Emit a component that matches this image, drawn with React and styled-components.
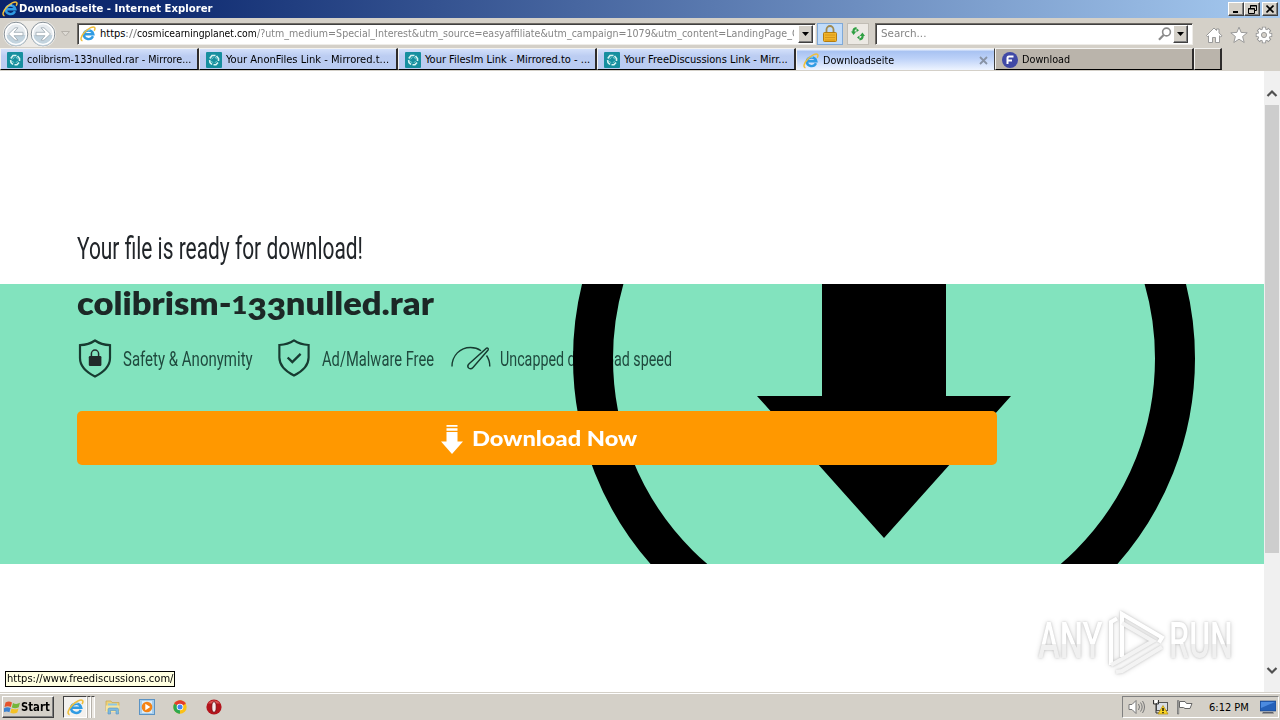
import React, { useLayoutEffect, useRef, useState } from "react";
import styled, { createGlobalStyle, css } from "styled-components";

const GlobalStyle = createGlobalStyle`
  *, *::before, *::after { box-sizing: border-box; }
  html, body { margin: 0; padding: 0; overflow: hidden; background: #fff; }
  body { font-family: "DejaVu Sans Condensed", "DejaVu Sans", sans-serif; font-size: 11px; color: #000; }
  svg { display: block; flex: none; }
`;

/* ---------- text set to a fixed measure ---------- */

const Measure = styled.span`
  display: block;
  flex: none;
  width: ${(p) => p.$w}px;
  white-space: pre;
`;
const Stretch = styled.span`
  display: inline-block;
  transform-origin: 0 50%;
`;

function Fit({ w, children, className }) {
  const ref = useRef(null);
  const [scale, setScale] = useState(1);
  useLayoutEffect(() => {
    setScale(w / ref.current.offsetWidth);
  }, [w]);
  return (
    <Measure $w={w} className={className}>
      <Stretch ref={ref} style={{ transform: `scaleX(${scale})` }}>{children}</Stretch>
    </Measure>
  );
}

/* ---------- window frame ---------- */

const Screen = styled.div`
  width: 1280px;
  height: 720px;
  display: flex;
  flex-direction: column;
  overflow: hidden;
  background: #d4d0c8;
`;

const TitleBar = styled.header`
  height: 18px;
  flex: none;
  display: flex;
  align-items: center;
  padding: 0 2px;
  background: linear-gradient(90deg, #0a246a 0%, #0e2a70 12%, #a6caf0 100%);
`;
const TitleText = styled(Fit)`
  margin-left: 1px;
  color: #fff;
  font-weight: 700;
  line-height: 18px;
`;
const WindowButtons = styled.div`
  margin-left: auto;
  display: flex;
`;
const raised = css`
  background: #d4d0c8;
  border: 1px solid;
  border-color: #fff #404040 #404040 #fff;
  box-shadow: inset -1px -1px 0 #808080;
`;
const WindowButton = styled.button`
  ${raised}
  width: 16px;
  height: 14px;
  padding: 0;
  margin-left: ${(p) => (p.$gap ? 2 : 0)}px;
  display: flex;
  align-items: center;
  justify-content: center;
`;

/* ---------- navigation row ---------- */

const NavRow = styled.div`
  height: 30px;
  flex: none;
  display: flex;
  align-items: center;
  padding-left: 3px;
  border-top: 1px solid #d4d0c8;
`;
const OrbPair = styled.div`
  display: flex;
  gap: 1px;
  height: 26px;
  border-radius: 13px;
  background: #eceae6;
`;
const AddressBox = styled.div`
  display: flex;
  align-items: center;
  flex: none;
  width: ${(p) => p.$w}px;
  height: 22px;
  margin-left: ${(p) => p.$gap}px;
  padding: 1px 2px;
  background: #fff;
  border: 1px solid;
  border-color: #706c66 #eeece8 #eeece8 #706c66;
  box-shadow: inset 1px 1px 0 #404040;
`;
const UrlText = styled.div`
  display: flex;
  flex: 1;
  overflow: hidden;
  margin: 0 4px;
  height: 18px;
  line-height: 18px;
`;
const UrlPart = styled(Fit)`
  color: ${(p) => (p.$strong ? "#000" : "#858585")};
`;
const GreyPart = styled(Fit)`
  color: #858585;
`;
const DropButton = styled.button`
  ${raised}
  width: 15px;
  height: 18px;
  padding: 0;
  flex: none;
  display: flex;
  align-items: center;
  justify-content: center;
`;
const ToolButton = styled.div`
  width: ${(p) => p.$w}px;
  height: 22px;
  flex: none;
  margin-left: ${(p) => p.$gap}px;
  display: flex;
  align-items: center;
  justify-content: center;
  background: ${(p) => (p.$lit ? "#c1dcfa" : "#ece9e4")};
  border: 1px solid ${(p) => (p.$lit ? "#7fa9d8" : "#c1bdb5")};
`;
const SearchText = styled(Fit)`
  color: #858585;
  margin-left: 3px;
  line-height: 18px;
`;
const SearchTools = styled.div`
  margin-left: auto;
  margin-right: 2px;
  display: flex;
  gap: 1px;
  align-items: center;
`;
const CommandIcons = styled.div`
  margin-left: 12px;
  padding-top: 3px;
  display: flex;
  gap: 7px;
`;

/* ---------- tabs ---------- */

const TabRow = styled.nav`
  height: 23px;
  flex: none;
  display: flex;
  padding-bottom: 1px;
`;
const tabFill = {
  grouped: "linear-gradient(180deg, #d3e0fa 0%, #bccdf2 35%, #b9cbf1 100%)",
  active: "linear-gradient(180deg, #f4f8ff 0%, #a9c3f2 12%, #bcd1f8 45%, #eef4ff 100%)",
  idle: "#bab4ab",
};
const Tab = styled.div`
  width: ${(p) => p.$w}px;
  height: 22px;
  flex: none;
  display: flex;
  align-items: center;
  padding: 2px 6px 0 6px;
  background: ${(p) => tabFill[p.$kind]};
  border-top: 1px solid #f4f3f0;
  border-left: 1px solid #f4f3f0;
  border-right: ${(p) => (p.$kind === "active" ? "1px solid #404040" : "2px solid #2e2c2c")};
  border-bottom: ${(p) => (p.$kind === "active" ? "0" : "1px solid #000")};
`;
const TabLabel = styled(Fit)`
  margin-left: 4px;
  line-height: 18px;
`;
const TabClose = styled.span`
  margin-left: auto;
`;

/* ---------- page ---------- */

const Viewport = styled.div`
  flex: 1;
  min-height: 0;
  display: flex;
  position: relative;
  background: #fff;
`;
const Page = styled.main`
  width: 1264px;
  display: flex;
  flex-direction: column;
`;
const Intro = styled.section`
  height: 213px;
  flex: none;
  padding: 156px 0 0 77px;
`;
const Lead = styled(Fit)`
  font-family: Roboto, sans-serif;
  font-weight: 400;
  font-size: 30.5px;
  line-height: 44px;
  color: #212529;
`;
const Band = styled.section`
  position: relative;
  height: 280px;
  flex: none;
  overflow: hidden;
  padding: 0 0 0 77px;
  background: #82e3be;
`;
const FileName = styled(Fit)`
  font-family: Lato, sans-serif;
  font-weight: 800;
  font-size: 32px;
  line-height: 37px;
  height: 38px;
  color: #1c2826;
`;
const OldStyle = styled.span`
  display: inline-block;
  line-height: 1;
  font-size: ${(p) => (p.$drop ? 0.96 : 0.79)}em;
  transform: translateY(${(p) => (p.$drop ? 0.16 : -0.02)}em);
`;
const Features = styled.div`
  display: flex;
  align-items: center;
  height: 40px;
  margin-top: 16px;
`;
const FeatureIcon = styled.span`
  width: ${(p) => p.$w}px;
  flex: none;
`;
const FeatureText = styled(Fit)`
  font-family: Roboto, sans-serif;
  font-weight: 400;
  font-size: 21px;
  line-height: 40px;
  padding-top: 1px;
  color: #1f4a3e;
`;
const Artwork = styled.svg`
  position: absolute;
  left: 0;
  top: 0;
`;
const DownloadButton = styled.button`
  position: relative;
  z-index: 1;
  width: 920px;
  height: 54px;
  margin-top: 33px;
  padding: 1px 0 0 4px;
  border: 0;
  border-radius: 5px;
  background: #ff9800;
  display: flex;
  align-items: center;
  justify-content: center;
  gap: 9px;
`;
const ArrowSlot = styled.span`
  padding-top: 2px;
`;
const DownloadLabel = styled(Fit)`
  font-family: Lato, sans-serif;
  font-weight: 900;
  font-size: 21.5px;
  line-height: 53px;
  text-align: left;
  color: #fff;
`;

const ScrollBar = styled.aside`
  width: 16px;
  background: #f0f0f0;
  display: flex;
  flex-direction: column;
  align-items: center;
  padding: 18px 0 17px;
`;
const Thumb = styled.div`
  width: 14px;
  height: 448px;
  margin: 7px 0 auto;
  background: #cdcdcd;
`;

const StatusTip = styled.div`
  position: absolute;
  left: 5px;
  bottom: 5px;
  width: 170px;
  height: 16px;
  padding-left: 1px;
  line-height: 14px;
  border: 1px solid #000;
  background: #ffffe1;
`;
const Watermark = styled.div`
  position: absolute;
  left: 1038px;
  top: 535px;
  display: flex;
  align-items: center;
  gap: 4px;
  filter: drop-shadow(0 0 1px rgba(0, 0, 0, 0.16)) drop-shadow(0 0 2.5px rgba(0, 0, 0, 0.16));
`;
const MarkText = styled(Fit)`
  font-family: Roboto, sans-serif;
  font-weight: 500;
  font-size: 50px;
  line-height: 70px;
  span {
    color: transparent;
    background: linear-gradient(180deg, #fff 54%, #f0f0f0 54%);
    background-clip: text;
    -webkit-background-clip: text;
  }
`;

/* ---------- taskbar ---------- */

const TaskBar = styled.footer`
  height: 28px;
  flex: none;
  display: flex;
  align-items: center;
  padding: 2px 1px 0 2px;
  background: #d4d0c8;
  box-shadow: inset 0 1px 0 #d4d0c8, inset 0 2px 0 #fff;
`;
const StartButton = styled.button`
  ${raised}
  width: 52px;
  height: 22px;
  padding: 0 0 0 1px;
  display: flex;
  align-items: center;
`;
const StartText = styled(Fit)`
  font-family: "DejaVu Sans Condensed", sans-serif;
  font-weight: 700;
  font-size: 12px;
  line-height: 18px;
  text-align: left;
  color: #000;
`;
const RunningApp = styled.div`
  width: 24px;
  height: 22px;
  margin-left: 9px;
  display: flex;
  align-items: center;
  justify-content: center;
  background: #f3f1ee;
  border: 1px solid;
  border-color: #404040 #fff #fff #404040;
`;
const StackEdge = styled.div`
  width: 4px;
  height: 22px;
  background: #ece9e4;
  border-top: 1px solid #404040;
  border-right: 1px solid #fff;
  border-left: 1px solid #b5b1a9;
`;
const QuickIcons = styled.div`
  display: flex;
  margin-left: 10px;
  gap: 17.7px;
`;
const Tray = styled.div`
  margin-left: auto;
  width: 157px;
  height: 22px;
  display: flex;
  align-items: center;
  padding: 0 2px 0 5px;
  border: 1px solid;
  border-color: #808080 #fff #fff #808080;
`;
const TrayIcons = styled.div`
  display: flex;
  gap: 7px;
`;
const Clock = styled(Fit)`
  margin-left: 16px;
  margin-right: auto;
  line-height: 19px;
`;

/* ---------- icons ---------- */

const IEIcon = ({ s = 16 }) => (
  <svg width={s} height={s} viewBox="0 0 16 16" fill="none">
    <path d="M13 10.300A4.900 4.900 0 0 1 3.700 8.700 4.900 4.900 0 0 1 13.300 8.300H5" stroke="#2f9be3" strokeWidth="2.400" />
    <path d="M4.600 6.200A4.500 4.500 0 0 1 10 4" stroke="#a5dcfa" strokeWidth="1" />
    <path d="M2.500 14.700C-.2 14.200 1 10 4.600 6.200 8.800 1.800 13.300.1 14.600 1.500c.7.8.2 2.200-.5 3.200" stroke="#f0bf3c" strokeWidth="1.500" />
  </svg>
);
const ArrowOrb = ({ flip }) => (
  <svg width="26" height="26" viewBox="0 0 26 26">
    <circle cx="13" cy="13" r="11.800" fill="#e6ebef" stroke="#899299" />
    <path d="M2 14a11 11 0 0 0 22 0Z" fill="#c2d3de" />
    <circle cx="13" cy="13" r="10.400" fill="none" stroke="#fff" strokeWidth="1.400" />
    <g transform={flip ? "matrix(-1 0 0 1 26 0)" : undefined}>
      <path d="M5.500 13 12 6.800h3l-4 4.500h9v3.400h-9l4 4.500h-3Z" fill="#fff" stroke="#9aa7b0" strokeWidth=".8" />
    </g>
  </svg>
);
const Caret = ({ fill = "#000", w = 7 }) => (
  <svg width={w} height="4" viewBox="0 0 7 4"><path d="M0 0h7L3.500 4Z" fill={fill} /></svg>
);
const MirrorIcon = () => (
  <svg width="16" height="16" viewBox="0 0 16 16" fill="none">
    <rect width="16" height="16" rx="1" fill="#178f9f" />
    <path d="M3.800 6.500 6 3.500h3.500M10.500 4l2 2.500v2.500M12 10.500 10 12.700H7.500M6 12.500 4 10.500 3.600 8" stroke="#d8f3f2" strokeWidth="1.600" />
    <path d="m5.500 7 2-1.500M9 5l1.800 2.300M10.700 9 9 10.800M7 10.800 5.300 9" stroke="#7fd0d2" />
  </svg>
);
const FIcon = () => (
  <svg width="16" height="16" viewBox="0 0 16 16">
    <circle cx="8" cy="8" r="8" fill="#4049a6" />
    <path d="M5.500 12V6q0-1.500 1.500-1.500h4.500M5.500 8.500H10" stroke="#fff" strokeWidth="2" fill="none" />
  </svg>
);
const LockIcon = () => (
  <svg width="14" height="17" viewBox="0 0 14 17">
    <path d="M3.500 8V4.500a3.500 3.500 0 0 1 7 0V8" fill="none" stroke="#a08a50" strokeWidth="1.800" />
    <rect x=".5" y="7.500" width="13" height="9" rx="1" fill="#f0b429" stroke="#b47d10" />
    <path d="M2 10h10M2 12.500h10M2 15h10" stroke="#d18f16" strokeWidth=".8" />
  </svg>
);
const RefreshIcon = () => (
  <svg width="14" height="14" viewBox="0 0 14 14" fill="#2fa043">
    <path d="M5.500 0v2.300c-1.500.2-2 1-2 2.200H5.300L2.600 8 0 4.500h1.300C1.300 2 2.800.1 5.500 0Z" />
    <path d="M5.500 1.200 8 3.300 5.500 5.200Z" />
    <path d="M8.500 13.500v-2.300c1.500-.2 2-1 2-2.200H8.700l2.700-3.500L14 9h-1.300c0 2.500-1.500 4.400-4.200 4.500Z" />
    <path d="M8.500 8.500v4L6 10.400Z" />
  </svg>
);
const SearchGlyph = () => (
  <svg width="14" height="14" viewBox="0 0 14 14" fill="none" stroke="#8a8a8a">
    <circle cx="8.500" cy="5" r="3.900" strokeWidth="1.600" /><path d="M5.600 8 1 12.800" strokeWidth="2.200" />
  </svg>
);
const cmd = { fill: "#fff", stroke: "#929292", strokeWidth: 0.9 };
const HomeIcon = () => (
  <svg width="18" height="18" viewBox="0 0 18 18" {...cmd}>
    <path d="M1.500 9.500 9 2l2.500 2.500V3h2.500v4l3 2.800-1.200 1.200-1.300-1.200v6.700h-4v-5H7.500v5h-4V9.800L2.600 10.800Z" />
  </svg>
);
const StarIcon = () => (
  <svg width="18" height="18" viewBox="0 0 18 18" {...cmd}>
    <path d="m9 1.200 2.100 5.200 6.100.4-4.600 3.700 1.600 6L9 13.200l-5.200 3.300 1.600-6L.8 6.800l6.100-.4Z" />
  </svg>
);
const GearIcon = () => (
  <svg width="18" height="18" viewBox="0 0 18 18" fill="none">
    <g stroke="#929292" strokeWidth="4.200">
      <path d="M9 .8v16.400M.8 9h16.400M3.200 3.200l11.600 11.600M14.800 3.200 3.200 14.800" />
    </g>
    <circle cx="9" cy="9" r="6.400" fill="#929292" />
    <path d="M9 1.600v14.800M1.600 9h14.800M3.800 3.800l10.400 10.400M14.200 3.800 3.800 14.200" stroke="#fff" strokeWidth="2.500" />
    <circle cx="9" cy="9" r="5.700" fill="#fff" />
    <circle cx="9" cy="9" r="2.600" fill="#d4d0c8" stroke="#929292" strokeWidth=".9" />
  </svg>
);
const Chevron = ({ down }) => (
  <svg width="12" height="9" viewBox="0 0 12 9">
    <path d={down ? "M1.500 2 6 6.500 10.500 2" : "M1.500 7 6 2.500 10.500 7"} fill="none" stroke="#505050" strokeWidth="2.200" />
  </svg>
);

const shield = "M17 1.500C12 5 7 6 2 6.200V19c0 9.500 7 14.500 15 18.500 8-4 15-9 15-18.500V6.200C27 6 22 5 17 1.500Z";
const ShieldLock = () => (
  <svg width="36" height="39" viewBox="-1 0 36 39">
    <path d={shield} fill="none" stroke="#173b31" strokeWidth="2.200" />
    <rect x="10.800" y="17" width="12.600" height="10" rx="1.200" fill="#222b2b" />
    <path d="M13.400 17.500v-2.800a3.600 3.600 0 0 1 7.200 0v2.800" fill="none" stroke="#222b2b" strokeWidth="1.500" />
  </svg>
);
const ShieldCheck = () => (
  <svg width="35" height="38" viewBox="-1 0 35 39">
    <path d={shield} fill="none" stroke="#173b31" strokeWidth="2.200" />
    <path d="m10.500 19 4.800 4.800 8.500-8.500" fill="none" stroke="#173b31" strokeWidth="2.400" />
  </svg>
);
const Gauge = () => (
  <svg width="40" height="24" viewBox="0 0 40 24" fill="none" stroke="#173b31" strokeWidth="1.400">
    <path d="M1 20.500C1 9.500 9 1.500 19.500 1.500c4 0 7.500 1.100 10.500 3.200M35.500 9.500c2.200 3 3.300 6.800 3.300 11" />
    <path d="M35.500 2.200c1.300-.5 2.300.6 1.600 1.800L22 21.500c-1.600 1.800-3.600 1.500-4.500.4-1.100-1.300-.7-3 .6-4.200Z" />
  </svg>
);
const ArrowDown = () => (
  <svg width="22" height="30" viewBox="0 0 22 30" fill="#fff">
    <path d="M5.500 0h11v1.800h-11ZM5.500 3.300h11v2.500h-11ZM5.500 7h11v9.500H22L11 29 0 16.500h5.500Z" />
  </svg>
);
const Play = () => (
  <svg width="58" height="68" viewBox="0 0 58 68" fill="none" strokeWidth="4">
    <path d="M4 58V15l6-3.500" stroke="#fff" />
    <path d="M15 50V7l40 23.500-3 5" stroke="#fff" />
    <path d="M15 16 46 34 15 52 4 58M9 65l6-1 40-24" stroke="#f3f3f3" />
  </svg>
);

const Flag = () => (
  <svg width="17" height="16" viewBox="0 0 17 16">
    <path d="M1.500 3.500C4 2 6 2.200 8 3.500L6.800 8C5 7 3 6.800.5 8Z" fill="#e5542c" />
    <path d="M9 4c2 1.200 4.500 1.200 7-.2l-1.300 4.400C12.500 9.500 10 9.500 7.800 8.400Z" fill="#74b63b" />
    <path d="M.2 9C2.500 7.800 4.700 8 6.600 9l-1.200 4.200C3.600 12.200 1.500 12.200-.8 13.400Z" fill="#3b82d0" />
    <path d="M7.500 9.500c2 1.100 4.500 1.100 7-.1l-1.200 4.200c-2.400 1.300-4.800 1.300-7 .2Z" fill="#f4c125" />
  </svg>
);
const FolderIcon = () => (
  <svg width="16" height="16" viewBox="0 0 16 16">
    <path d="M1 2h5l1 1.500h7V12H1Z" fill="#ecd27b" stroke="#c8a64a" strokeWidth=".7" />
    <path d="M3 4.500h9v4H3Z" fill="#8cc7e6" /><path d="M1 6.500h13.500v6.500H1Z" fill="#f5e4a0" />
    <path d="M3 15v-4.500q0-1.500 1.500-1.500h7.500q1.500 0 1.500 1.500V15h-2.500v-3.500h-5.500V15Z" fill="#7db9e0" stroke="#5794c0" strokeWidth=".6" />
  </svg>
);
const MediaIcon = () => (
  <svg width="16" height="16" viewBox="0 0 16 16">
    <rect x=".5" y=".5" width="15" height="15" fill="#a6cdec" stroke="#5b93c4" />
    <rect x="3" y="2" width="10" height="12" fill="#d9ebf8" />
    <circle cx="8" cy="8" r="5.300" fill="#f48315" /><path d="M6.300 4.800 11.300 8l-5 3.200Z" fill="#fff" />
  </svg>
);
const ChromeIcon = () => (
  <svg width="16" height="16" viewBox="0 0 16 16">
    <circle cx="8" cy="8" r="6.700" fill="#fbc116" />
    <path d="M8 8 2.200 4.650A6.700 6.700 0 0 1 13.800 4.650Z" fill="#e33b2e" />
    <path d="M8 8 2.200 4.650A6.700 6.700 0 0 0 8 14.700Z" fill="#2da94f" />
    <circle cx="8" cy="8" r="3.300" fill="#fff" /><circle cx="8" cy="8" r="2.500" fill="#4285f4" />
  </svg>
);
const OperaIcon = () => (
  <svg width="16" height="16" viewBox="0 0 16 16">
    <circle cx="8" cy="8" r="7.600" fill="#b3141c" /><path d="M2 4.500a7.500 7.500 0 0 1 12 0Z" fill="#d95050" />
    <ellipse cx="8" cy="8" rx="2.200" ry="5.300" fill="#f6eaea" stroke="#6d0a10" strokeWidth=".8" />
  </svg>
);
const SpeakerIcon = () => (
  <svg width="17" height="16" viewBox="0 0 17 16" fill="none" stroke="#777">
    <path d="M1 5.500h3l4-4v13l-4-4H1Z" fill="#fff" /><path d="M10.500 5q2 3 0 6M12.500 3.500q3.300 4.500 0 9M14.500 2q4 6 0 12" />
  </svg>
);
const NetworkIcon = () => (
  <svg width="17" height="16" viewBox="0 0 17 16" fill="none">
    <rect x="4.500" y="3.500" width="11" height="8" fill="#d8dde4" stroke="#555" /><path d="M1.500 1v4h5V1M4 5v9h3" stroke="#333" />
    <path d="M2.500 1h3v3h-3Z" fill="#fff" />
    <path d="m11 6.500 5 8.500H6Z" fill="#f9d423" stroke="#b18b08" strokeWidth=".7" /><path d="M11 9v3M11 13v1.200" stroke="#000" strokeWidth="1.300" />
  </svg>
);
const FlagOutline = () => (
  <svg width="17" height="16" viewBox="0 0 17 16">
    <path d="M1.500 15V1.500h1.200V15Z" fill="#fff" stroke="#666" strokeWidth=".8" />
    <path d="M3.500 2.500h5.500l1.500 2H16L14 9.500H9l-1.500-1h-4Z" fill="#fff" stroke="#666" />
  </svg>
);
const MonitorIcon = () => (
  <svg width="16" height="16" viewBox="0 0 16 16">
    <rect x="0" y="2" width="16" height="10" fill="#2561b9" stroke="#153d7c" strokeWidth=".6" />
    <path d="M1 3h14L1 9Z" fill="#4c8be0" /><path d="M3 13h10l1 1.500H2Z" fill="#5c5f68" />
  </svg>
);

/* ---------- data ---------- */

const tabs = [
  { label: "colibrism-133nulled.rar - Mirrore...", w: 164, kind: "grouped", icon: MirrorIcon },
  { label: "Your AnonFiles Link - Mirrored.t...", w: 163, kind: "grouped", icon: MirrorIcon },
  { label: "Your FilesIm Link - Mirrored.to - ...", w: 165, kind: "grouped", icon: MirrorIcon },
  { label: "Your FreeDiscussions Link - Mirr...", w: 164, kind: "grouped", icon: MirrorIcon },
  { label: "Downloadseite", w: 71, kind: "active", icon: IEIcon },
  { label: "Download", w: 48, kind: "idle", icon: FIcon },
];

const features = [
  { label: "Safety & Anonymity", icon: ShieldLock, iconW: 46, w: 130, after: 23 },
  { label: "Ad/Malware Free", icon: ShieldCheck, iconW: 46, w: 112, after: 17 },
  { label: "Uncapped download speed", icon: Gauge, iconW: 49, w: 172, after: 0 },
];
const Feature = styled.div`
  display: flex;
  align-items: center;
  margin-right: ${(p) => p.$after}px;
`;

export default function App() {
  return (
    <Screen>
      <GlobalStyle />
      <TitleBar>
        <IEIcon />
        <TitleText w={193}>Downloadseite - Internet Explorer</TitleText>
        <WindowButtons>
          <WindowButton>
            <svg width="8" height="8"><path d="M1 6h5v2H1Z" /></svg>
          </WindowButton>
          <WindowButton>
            <svg width="9" height="9" fill="none" stroke="#000"><path d="M2.500 3V.5h6v5H7M2 1h7M.5 3.500h6v5h-6ZM0 4h7" /></svg>
          </WindowButton>
          <WindowButton $gap>
            <svg width="8" height="8" stroke="#000" strokeWidth="1.600"><path d="m.5.5 7 7m0-7-7 7" /></svg>
          </WindowButton>
        </WindowButtons>
      </TitleBar>

      <NavRow>
        <OrbPair>
          <ArrowOrb />
          <ArrowOrb flip />
        </OrbPair>
        <svg width="21" height="6" viewBox="0 0 21 6"><path d="M5.500.5h8l-4 4.500Z" fill="#dedbd5" stroke="#b5b1aa" /></svg>
        <AddressBox $w={739} $gap={0}>
          <IEIcon />
          <UrlText>
            <UrlPart w={25} $strong>https</UrlPart>
            <GreyPart w={12}>://</GreyPart>
            <UrlPart w={120} $strong>cosmicearningplanet.com</UrlPart>
            <GreyPart w={542}>/?utm_medium=Special_Interest&amp;utm_source=easyaffiliate&amp;utm_campaign=1079&amp;utm_content=LandingPage_C</GreyPart>
          </UrlText>
          <DropButton><Caret /></DropButton>
        </AddressBox>
        <ToolButton $w={26} $gap={1} $lit><LockIcon /></ToolButton>
        <ToolButton $w={22} $gap={4}><RefreshIcon /></ToolButton>
        <AddressBox $w={318} $gap={6}>
          <SearchText w={45}>Search...</SearchText>
          <SearchTools>
            <SearchGlyph />
            <DropButton><Caret /></DropButton>
          </SearchTools>
        </AddressBox>
        <CommandIcons><HomeIcon /><StarIcon /><GearIcon /></CommandIcons>
      </NavRow>

      <TabRow>
        {tabs.map(({ label, w, kind, icon: Icon }) => (
          <Tab key={label} $w={199} $kind={kind}>
            <Icon />
            <TabLabel w={w}>{label}</TabLabel>
            {kind === "active" && (
              <TabClose><svg width="9" height="9" stroke="#8893a5" strokeWidth="1.800"><path d="m1 1 7 7m0-7-7 7" /></svg></TabClose>
            )}
          </Tab>
        ))}
        <Tab $w={28} $kind="idle" />
      </TabRow>

      <Viewport>
        <Page>
          <Intro><Lead w={286}>Your file is ready for download!</Lead></Intro>
          <Band>
            <FileName w={357}>
              colibrism-<OldStyle>1</OldStyle><OldStyle $drop>33</OldStyle>nulled.rar
            </FileName>
            <Features>
              {features.map(({ label, icon: Icon, iconW, w, after }) => (
                <Feature key={label} $after={after}>
                  <FeatureIcon $w={iconW}><Icon /></FeatureIcon>
                  <FeatureText w={w}>{label}</FeatureText>
                </Feature>
              ))}
            </Features>
            <Artwork width="1264" height="280" viewBox="0 0 1264 280">
              <circle cx="884" cy="74.500" r="291" fill="none" stroke="#000" strokeWidth="40" />
              <path d="M822 0h124v112h65L884 254 757 112h65Z" />
            </Artwork>
            <DownloadButton>
              <ArrowSlot><ArrowDown /></ArrowSlot>
              <DownloadLabel w={165}>Download Now</DownloadLabel>
            </DownloadButton>
          </Band>
        </Page>
        <ScrollBar>
          <Chevron />
          <Thumb />
          <Chevron down />
        </ScrollBar>
        <StatusTip><Fit w={166}>https://www.freediscussions.com/</Fit></StatusTip>
        <Watermark>
          <MarkText w={65}>ANY</MarkText>
          <Play />
          <MarkText w={64}>RUN</MarkText>
        </Watermark>
      </Viewport>

      <TaskBar>
        <StartButton><Flag /><StartText w={29}>Start</StartText></StartButton>
        <RunningApp><IEIcon s={17} /></RunningApp>
        <StackEdge />
        <StackEdge />
        <QuickIcons><FolderIcon /><MediaIcon /><ChromeIcon /><OperaIcon /></QuickIcons>
        <Tray>
          <TrayIcons><SpeakerIcon /><NetworkIcon /><FlagOutline /></TrayIcons>
          <Clock w={40}>6:12 PM</Clock>
          <MonitorIcon />
        </Tray>
      </TaskBar>
    </Screen>
  );
}
